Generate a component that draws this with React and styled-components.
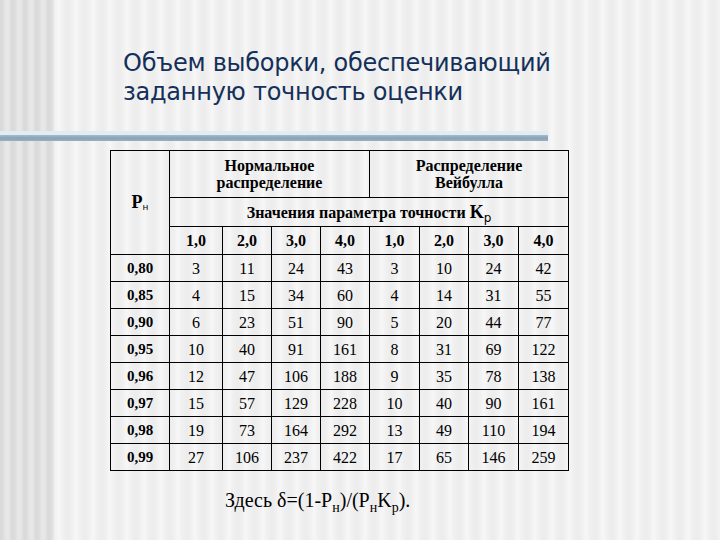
import React from "react";
import styled, { createGlobalStyle } from "styled-components";

const Global = createGlobalStyle`
  html, body { margin: 0; padding: 0; }
  body {
    width: 720px;
    height: 540px;
    overflow: hidden;
    background-color: #f1f1f1;
    background-image:
      repeating-linear-gradient(to right, #d9d9d9 0px, #dcdcdc 3px, #e8e8e8 6px, #e6e6e6 9px, #d9d9d9 12px),
      repeating-linear-gradient(to right, #ececec 0px, #f0f0f0 4px, #f7f7f7 8px, #f0f0f0 12px, #ececec 17px);
    background-size: 54px 100%, 100% 100%;
    background-repeat: no-repeat, repeat;
  }
`;

const Slide = styled.div`
  width: 720px;
  height: 540px;
  display: flex;
  flex-direction: column;
`;

const Title = styled.h1`
  margin: 49px 0 0 123px;
  font-family: "DejaVu Sans", "Liberation Sans", sans-serif;
  font-weight: normal;
  font-size: 24px;
  line-height: 29px;
  color: #14305a;
  letter-spacing: -0.25px;
`;

const Bar = styled.div`
  margin-top: 28px;
  width: 548px;
  height: 6px;
  background: linear-gradient(to bottom, #a7bccd 0px, #8aa2b7 3px, #98afc2 6px);
  box-shadow: 0 -4px 0 #e2ecf3;
`;

const Table = styled.table`
  margin: 9px 0 0 110px;
  width: 458px;
  border-collapse: collapse;
  table-layout: fixed;
  font-family: "Liberation Serif", "Times New Roman", serif;
  color: #000;
`;

const Cell = styled.td`
  border: 1px solid #000;
  padding: 0;
  text-align: center;
  vertical-align: middle;
  font-size: ${(p) => (p.$head ? "16px" : p.$bold ? "15px" : "16px")};
  font-weight: ${(p) => (p.$bold || p.$head ? "bold" : "normal")};
  line-height: 17px;
`;

const Row = styled.tr`
  height: ${(p) => p.$h}px;
`;

const BigP = styled.span`
  font-size: 18px;
  font-weight: bold;
`;

const SansSub = styled.sub`
  font-family: "DejaVu Sans", "Liberation Sans", sans-serif;
  font-weight: normal;
  font-size: ${(p) => p.$size || 9}px;
  vertical-align: ${(p) => p.$shift || -3}px;
  line-height: 0;
`;

const Footer = styled.p`
  margin: 17px 0 0 225px;
  font-family: "Liberation Serif", "Times New Roman", serif;
  font-size: 20px;
  line-height: 24px;
  color: #000;
`;

const SerifSub = styled.sub`
  font-size: 14px;
  vertical-align: -5px;
  line-height: 0;
`;

const widths = [59, 53, 49, 49, 49, 50, 49, 50, 50];
const kp = ["1,0", "2,0", "3,0", "4,0", "1,0", "2,0", "3,0", "4,0"];
const data = [
  ["0,80", 3, 11, 24, 43, 3, 10, 24, 42],
  ["0,85", 4, 15, 34, 60, 4, 14, 31, 55],
  ["0,90", 6, 23, 51, 90, 5, 20, 44, 77],
  ["0,95", 10, 40, 91, 161, 8, 31, 69, 122],
  ["0,96", 12, 47, 106, 188, 9, 35, 78, 138],
  ["0,97", 15, 57, 129, 228, 10, 40, 90, 161],
  ["0,98", 19, 73, 164, 292, 13, 49, 110, 194],
  ["0,99", 27, 106, 237, 422, 17, 65, 146, 259],
];

export default function App() {
  return (
    <Slide>
      <Global />
      <Title>
        Объем выборки, обеспечивающий
        <br />
        заданную точность оценки
      </Title>
      <Bar />
      <Table>
        <colgroup>
          {widths.map((w, i) => (
            <col key={i} style={{ width: w }} />
          ))}
        </colgroup>
        <tbody>
          <Row $h={47}>
            <Cell rowSpan={3} $head>
              <BigP>P</BigP>
              <SansSub $size={9} $shift={-2}>н</SansSub>
            </Cell>
            <Cell colSpan={4} $head>
              Нормальное
              <br />
              распределение
            </Cell>
            <Cell colSpan={4} $head>
              Распределение
              <br />
              Вейбулла
            </Cell>
          </Row>
          <Row $h={29}>
            <Cell colSpan={8} $head>
              Значения параметра точности <BigP>K</BigP>
              <SansSub $size={12} $shift={-4}>р</SansSub>
            </Cell>
          </Row>
          <Row $h={28}>
            {kp.map((k, i) => (
              <Cell key={i} $head>
                {k}
              </Cell>
            ))}
          </Row>
          {data.map((r) => (
            <Row key={r[0]} $h={27}>
              {r.map((v, i) => (
                <Cell key={i} $bold={i === 0}>
                  {v}
                </Cell>
              ))}
            </Row>
          ))}
        </tbody>
      </Table>
      <Footer>
        Здесь δ=(1-P<SerifSub>н</SerifSub>)/(P<SerifSub>н</SerifSub>K
        <SerifSub>р</SerifSub>).
      </Footer>
    </Slide>
  );
}
